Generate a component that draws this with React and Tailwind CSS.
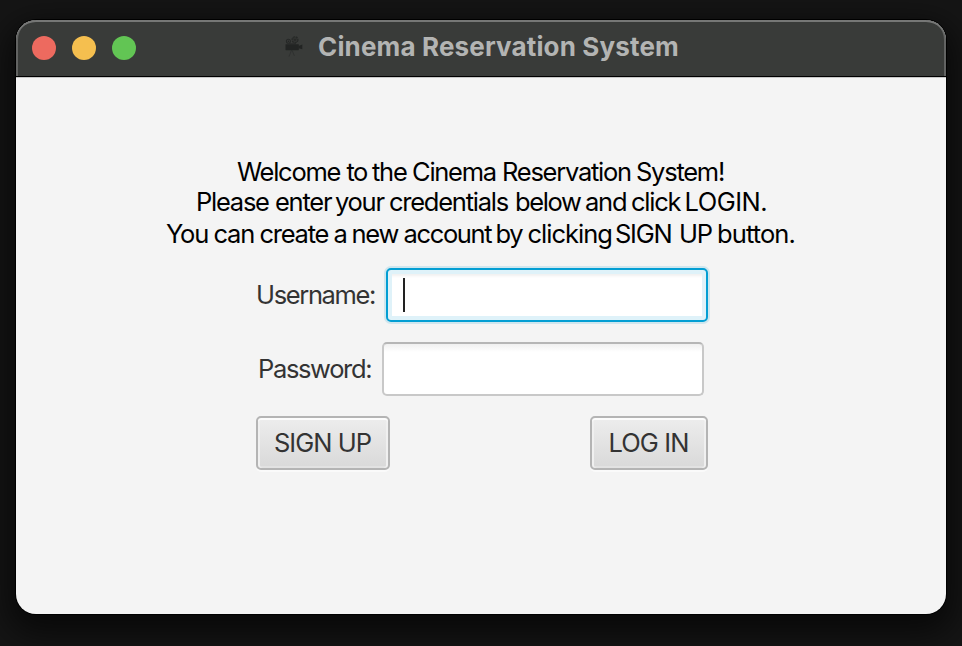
function CameraIcon() {
  return (
    <svg viewBox="0 0 18 22" className="h-[22px] w-[18px]" fill="#222423">
      <rect x="0.5" y="8.2" width="13.3" height="6" rx="0.4" />
      <path d="M13.5 10 L17.3 8.6 V13.2 L13.5 12.2 Z" />
      <circle cx="3.4" cy="5.2" r="2" fill="none" stroke="#262827" strokeWidth="1.1" />
      <circle cx="3.4" cy="5.2" r="0.7" />
      <circle cx="10" cy="3.8" r="3" fill="none" stroke="#262827" strokeWidth="1.1" strokeDasharray="2.2 0.7" />
      <path d="M10 1V7.8M7 3.8H13M7.9 1.7L12.1 5.9M12.1 1.7L7.9 5.9M4.6 7.6H11" stroke="#262827" strokeWidth="0.7" />
      <path d="M6.6 14.2L4 20.5M7 14.2L9.4 19.8" stroke="#2b2d2c" strokeWidth="0.7" />
    </svg>
  );
}

function Button({ children, className }) {
  return (
    <button
      className={`flex h-[54px] items-center justify-center rounded-[5px] border-2 border-[#b4b4b4] bg-linear-to-b from-[#ededed] to-[#d9d9d9] pr-px text-[25.5px] leading-none text-[#333] shadow-[inset_0_2px_0_#fcfcfc,inset_2px_0_0_#f0f0f0,inset_-2px_0_0_#f0f0f0,inset_0_-2px_0_#e2e2e2,0_2px_0_#fafafa] ${className}`}
    >
      {children}
    </button>
  );
}

// Each line is a list of [word, advance in px, optional tracking class].
const welcome = [
  [["Welcome", 109.5], ["to", 25.5, "tracking-[-1.6px]"], ["the", 40], ["Cinema", 90], ["Reservation", 134], ["System!", 89]],
  [["Please", 79], ["enter", 60], ["your", 54], ["credentials", 126], ["below", 70, "tracking-[-1.4px]"], ["and", 46], ["click", 53.5], ["LOGIN.", 82.5, "tracking-[-0.5px]"]],
  [["You", 47.5], ["can", 46], ["create", 74], ["a", 18], ["new", 52], ["account", 92, "tracking-[-1.35px]"], ["by", 32], ["clicking", 87.5, "tracking-[-1px]"], ["SIGN", 64], ["UP", 38], ["button.", 79, "tracking-[-0.9px]"]],
];

function Line({ words, className }) {
  return (
    <p className={`flex justify-center ${className}`}>
      {words.map(([word, width, tracking]) => (
        <span key={word} className={tracking} style={{ width }}>
          {word}{" "}
        </span>
      ))}
    </p>
  );
}

export default function App() {
  return (
    <div className="h-[646px] w-[962px] overflow-hidden bg-[#151515] px-4 pt-5 font-['Inter','Liberation_Sans',sans-serif]">
      <div className="flex h-[594px] flex-col overflow-hidden rounded-[20px] bg-[#f4f4f4] shadow-[0_0_0_1px_#000,0_12px_32px_8px_rgba(0,0,0,0.6)]">
        <header className="relative flex h-[57px] shrink-0 items-center justify-center rounded-t-[20px] border-b border-black bg-[#393b39] shadow-[inset_0_2px_0_#767776,inset_2px_0_0_#626362,inset_-2px_0_0_#626362]">
          <div className="absolute left-4 top-4 flex gap-4">
            <span className="size-6 rounded-full bg-[#ed6a5f]" />
            <span className="size-6 rounded-full bg-[#f5bf4f]" />
            <span className="size-6 rounded-full bg-[#62c554]" />
          </div>
          <div className="flex items-center pb-[3px] pl-0.5">
            <CameraIcon />
            <h1 className="ml-[15px] whitespace-nowrap text-[26px] font-bold leading-none tracking-[0.15px] text-[#b3b4b3]">
              Cinema Reservation System
            </h1>
          </div>
        </header>
        <main className="flex flex-col items-center border-t border-[#c8c8c8] pt-[78px]">
          <div className="whitespace-nowrap text-[25.5px] tracking-[-1.25px] text-black">
            <Line words={welcome[0]} className="leading-[31px]" />
            <Line words={welcome[1]} className="pl-px leading-[30px]" />
            <Line words={welcome[2]} className="leading-[33px]" />
          </div>
          <div className="ml-0.5 mt-[18px] flex w-[452px] flex-col">
            <div className="flex h-[54px] items-center justify-between text-[25.5px] text-[#333]">
              <label className="tracking-[-1.35px]">Username:</label>
              <div className="flex h-[54px] w-[322px] items-center rounded-[5px] border-2 border-[#039ed3] bg-white pl-[15px] shadow-[0_0_0_2px_#cfe6ee,inset_0_0_0_4px_#dff2f9,inset_0_7px_3px_-1px_#f0f0f0]">
                <span className="h-[34px] w-[2px] bg-[#222]" />
              </div>
            </div>
            <div className="mt-5 flex h-[54px] items-center justify-between pr-1 text-[25.5px] text-[#333]">
              <label className="ml-0.5 tracking-[-1.35px]">Password:</label>
              <div className="h-[54px] w-[322px] rounded-[5px] border-2 border-[#c8c8c8] border-t-[#b6b6b6] bg-linear-to-b from-[#f0f0f0] to-white to-[8px]" />
            </div>
            <div className="mt-5 flex justify-between">
              <Button className="w-[134px] tracking-[-0.95px]">SIGN UP</Button>
              <Button className="w-[118px] tracking-[-0.9px]">LOG IN</Button>
            </div>
          </div>
        </main>
      </div>
    </div>
  );
}
